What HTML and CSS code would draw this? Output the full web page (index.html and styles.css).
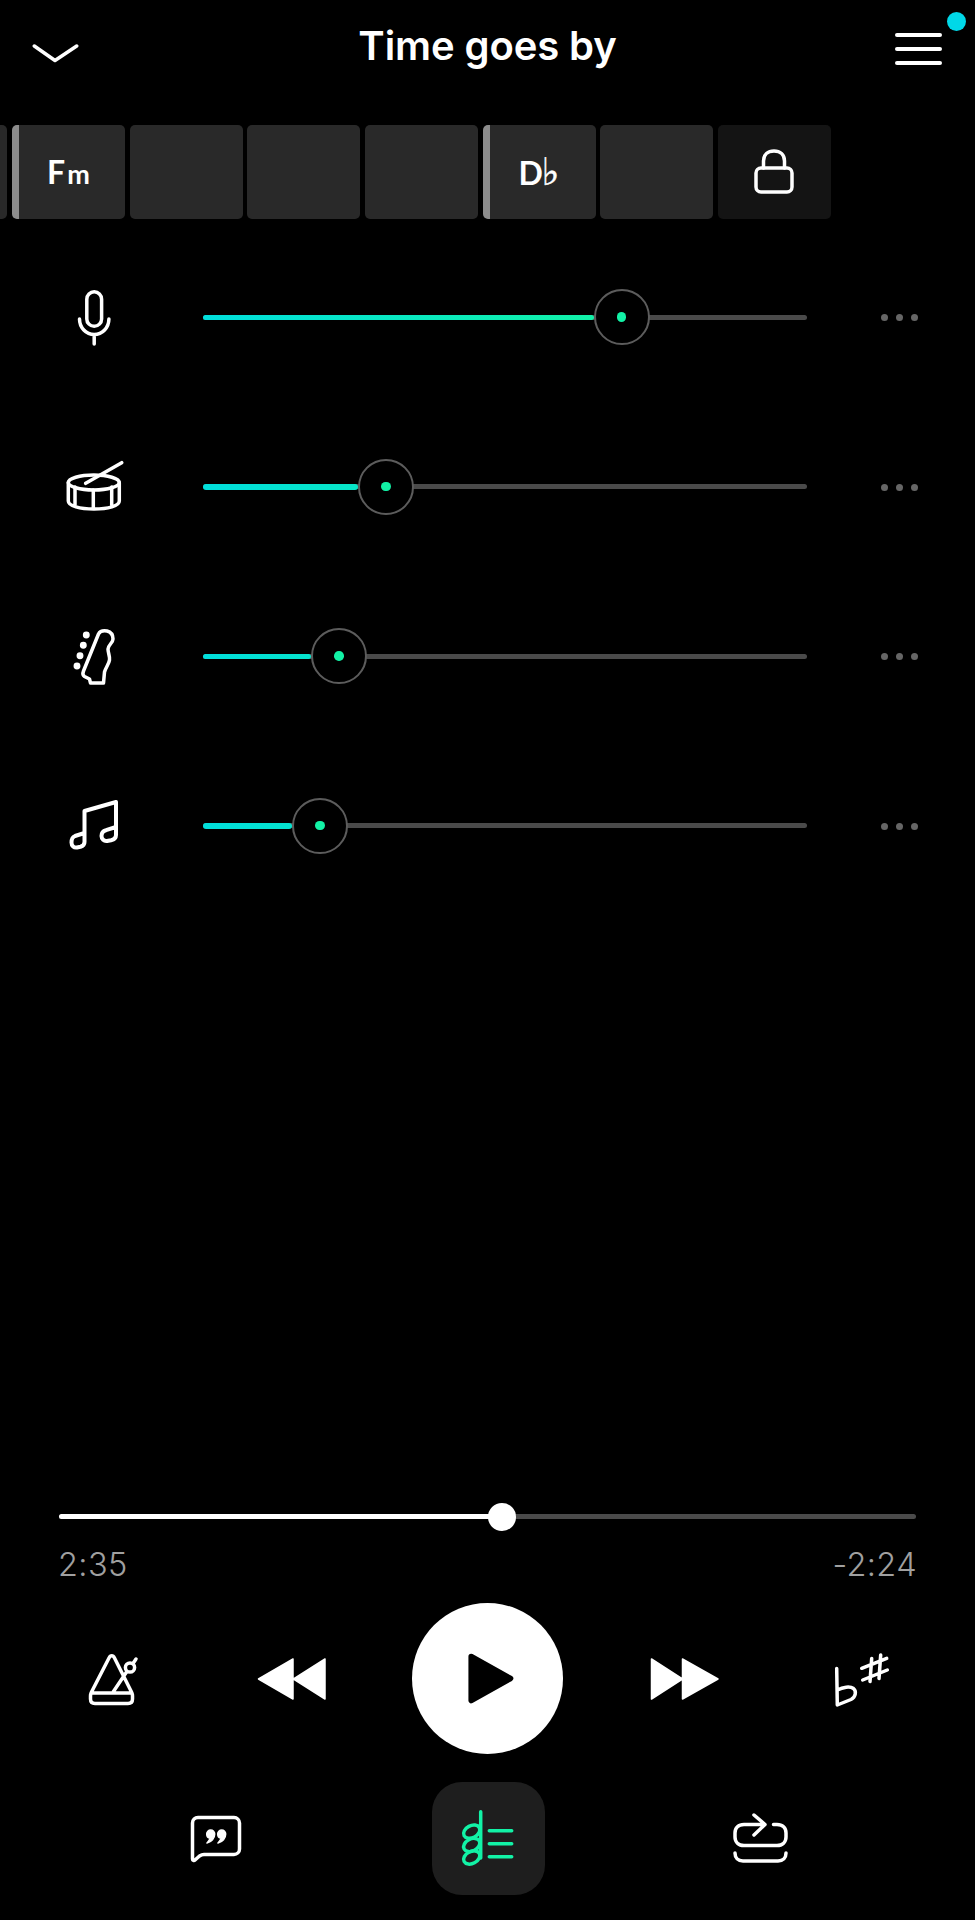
FILE: index.html
```html
<!DOCTYPE html>
<html lang="en">
<head>
<meta charset="utf-8">
<title>Time goes by</title>
<link rel="stylesheet" href="styles.css">
</head>
<body>
<main class="page">
  <header class="header">
    <svg class="chevron" viewBox="0 0 48 22"><path d="M2.3 3 L23 17.5 L44.7 3"/></svg>
    <h1 class="title">Time goes by</h1>
    <div class="menu"><span></span><span></span><span></span><i class="badge"></i></div>
  </header>

  <section class="chords">
    <div class="cell"></div>
    <div class="cell start"><span class="chord">F<small>m</small></span></div>
    <div class="cell"></div>
    <div class="cell"></div>
    <div class="cell"></div>
    <div class="cell start"><span class="chord">D<span class="flat">♭</span></span></div>
    <div class="cell"></div>
    <div class="cell locked">
      <svg class="lock" viewBox="0 0 44 48"><path d="M11.5 20 V13 C11.5 6.5 16 3 22 3 C28 3 32.5 6.5 32.5 13 V20"/><rect x="4" y="20" width="36" height="24" rx="5"/></svg>
    </div>
  </section>

  <section class="mixer">
    <div class="row">
      <svg class="icon" viewBox="0 0 64 64"><rect x="24.8" y="6.8" width="14.8" height="34.5" rx="7.4"/><path d="M17.5 34 A14.7 15.5 0 0 0 46.9 34 M32.2 50 V59"/></svg>
      <div class="track"><div class="fill" style="width:391px"></div><div class="knob" style="left:418.7px"><i></i></div></div>
      <div class="more"><i></i><i></i><i></i></div>
    </div>
    <div class="row">
      <svg class="icon" viewBox="0 0 64 64"><ellipse cx="31.8" cy="27.5" rx="25.5" ry="7.5"/><path d="M6.3 27.5 V46 C6.3 51 18 54 32 54 S57.3 51 57.3 46 V27.5 M13 32 V50 M31.3 35 V54 M49.7 32 V50 M23.7 28.3 L59.7 7.7"/></svg>
      <div class="track"><div class="fill" style="width:155px"></div><div class="knob" style="left:183px"><i></i></div></div>
      <div class="more"><i></i><i></i><i></i></div>
    </div>
    <div class="row">
      <svg class="icon" viewBox="0 0 64 64"><path d="M36.5 10 C38 7 42 6.5 45 7 C49 8 51 11 51 15 C51 19 46 21 46 25 C46 29 48 32 47.5 36 C47 40 43.5 44 42.5 48 L41.5 59 H28.5 L27.5 55 L22.5 52.5 C21 51.5 20.5 49.5 21.5 47 Z"/><circle class="solid" cx="24.3" cy="11" r="2.7"/><circle class="solid" cx="21.3" cy="21.3" r="2.7"/><circle class="solid" cx="18" cy="31.7" r="2.7"/><circle class="solid" cx="15" cy="42" r="2.7"/></svg>
      <div class="track"><div class="fill" style="width:108px"></div><div class="knob" style="left:136px"><i></i></div></div>
      <div class="more"><i></i><i></i><i></i></div>
    </div>
    <div class="row">
      <svg class="icon notes" viewBox="0 0 64 64"><path d="M22.5 39 L13 42 C10.5 43 9.5 45.5 9.5 48.5 C9.5 52 12 54 15 53.5 L18.5 52.8 C21.5 52 22.5 50 22.5 48 V17 L54 8 V41 C54 44 52 45.5 49 46.2 L45 47 C42 47.5 39.5 45 39.5 42 C39.5 39 41 37 44 36.2 L54 33"/></svg>
      <div class="track"><div class="fill" style="width:89px"></div><div class="knob" style="left:117px"><i></i></div></div>
      <div class="more"><i></i><i></i><i></i></div>
    </div>
  </section>

  <footer class="footer">
    <div class="progress">
      <div class="progress-track"><div class="progress-fill" style="width:442px"></div><div class="progress-knob" style="left:442.7px"></div></div>
    </div>
    <div class="times"><span>2:35</span><span>-2:24</span></div>

    <div class="controls">
      <svg class="icon-lg" viewBox="0 0 72 72"><path d="M33 15 L15.5 49 C15 50 14.5 51.5 14.5 53 V56 C14.5 59 16.5 60.5 19 60.5 H52 C54.5 60.5 56.5 59 56.5 56 V53 C56.5 51.5 56 50 55.5 49 L38.5 15 C37 12 34.5 12 33 15 Z M15 50 H56 M37.3 48.7 L50.7 28.7 M57 20.5 L60 16"/><circle cx="54" cy="24.5" r="4.6"/></svg>
      <svg class="icon-lg" viewBox="0 0 72 72"><path class="solid" d="M2.5 36 L37 16 V56 Z M37.5 36 L69 16 V56 Z"/></svg>
      <div class="play"><svg viewBox="0 0 60 60"><path class="solid" d="M10 6 L53 30 L10 54 Z"/></svg></div>
      <svg class="icon-lg" viewBox="0 0 72 72"><path class="solid" d="M2.5 16 L33.5 36 L2.5 56 Z M33.5 16 L69 36 L33.5 56 Z"/></svg>
      <svg class="icon-lg" viewBox="0 0 72 72"><path d="M10.7 25.5 L11.3 62 L25 56.5 C30 54 30.5 48 27.5 45.5 C24 43 17 44 11.3 47 M35.7 25.3 L60.7 15.3 M36.7 37 L61.3 27 M45.7 15.5 L44 38.5 M54.7 12 L53 35.5"/></svg>
    </div>

    <div class="tabs">
      <svg class="icon-lg" viewBox="0 0 72 72"><path d="M12.5 20 C12.5 16.5 15 14.5 18 14.5 H54 C57 14.5 59.5 17 59.5 20 V46 C59.5 49 57 51.5 54 51.5 H24 C22 51.5 21 52 19.5 53 L15 57 C14 58 12.5 57.5 12.5 56 Z"/><path class="solid" d="M26.7 31 A4 4 0 1 1 34.7 31 C34.7 35.5 31.5 39 27 40 C29 37.5 30 36 30 35 C28 35 26.7 33.3 26.7 31 Z M37.7 31 A4 4 0 1 1 45.7 31 C45.7 35.5 42.5 39 38 40 C40 37.5 41 36 41 35 C39 35 37.7 33.3 37.7 31 Z"/></svg>
      <div class="tab-active">
        <svg class="icon-lg accent" viewBox="0 0 72 72"><path d="M28.7 8.7 V55 M37.3 27.7 H59.7 M37.3 40.7 H59.7 M37.3 53.7 H59.7"/><ellipse cx="19.7" cy="28.7" rx="8.6" ry="6" transform="rotate(-28 19.7 28.7)"/><ellipse cx="19.7" cy="42" rx="8.6" ry="6" transform="rotate(-28 19.7 42)"/><ellipse cx="19.7" cy="54.5" rx="8.6" ry="6" transform="rotate(-28 19.7 54.5)"/></svg>
      </div>
      <svg class="icon-lg" viewBox="0 0 72 72"><path d="M41 21.5 H20 C14.5 21.5 11 25 11 30 V34 C11 39 14.5 42.5 20 42.5 H53 C58.5 42.5 62 39 62 34 V30 C62 25 58.5 21.5 53 21.5 H49.5 M30 12 L41 21.5 L30 32 M11 50 C11 55 14 58 19 58 H54 C59 58 62 55 62 50"/></svg>
    </div>
  </footer>
</main>
</body>
</html>
```

FILE: styles.css
```css
* { box-sizing: border-box; }
html, body { margin: 0; padding: 0; background: #000; }
.page {
  width: 975px; height: 1920px; overflow: hidden; background: #000; color: #fff;
  display: flex; flex-direction: column;
  font-family: Inter, "Liberation Sans", sans-serif;
}
svg { display: block; flex: none; }
svg path, svg rect, svg circle, svg ellipse {
  fill: none; stroke: #fff; stroke-width: 3.5; stroke-linecap: round; stroke-linejoin: round;
}
svg .solid { fill: #fff; stroke: #fff; stroke-width: 1.5; }
.notes path { stroke-width: 4; }

.header { height: 100px; position: relative; display: flex; align-items: flex-start; justify-content: center; }
.chevron { position: absolute; left: 32px; top: 42.5px; width: 48px; height: 22px; }
.title { margin: 22px 0 0; font-size: 40px; line-height: 48px; font-weight: 600; letter-spacing: -0.1px; }
.menu { position: absolute; left: 895px; top: 33px; width: 47px; height: 32px; display: flex; flex-direction: column; justify-content: space-between; }
.menu span { display: block; height: 3.6px; background: #fff; border-radius: 2px; }
.badge { position: absolute; left: 51.5px; top: -21px; width: 19px; height: 19px; border-radius: 50%; background: #00d8e8; }

.chords { margin: 25px 0 0 -105.7px; display: flex; gap: 4.67px; height: 94px; }
.cell { flex: none; width: 113px; height: 94px; background: #292929; border-radius: 5px; overflow: hidden; display: flex; align-items: center; justify-content: center; }
.cell.start { border-left: 7px solid #8c8c8c; padding-right: 7px; }
.cell.locked { background: #141414; }
.chord { font-family: Lato, "Noto Sans", sans-serif; font-weight: 700; font-size: 32px; line-height: 1; display: flex; align-items: baseline; }
.chord small { font-size: 27px; font-weight: 700; margin-left: 2px; }
.flat { font-family: "DejaVu Sans", sans-serif; font-weight: 700; font-size: 38px; line-height: 1; margin-left: -1px; -webkit-text-stroke: 0.5px #fff; }
.lock { width: 44px; height: 48px; }

.mixer { margin-top: 13.4px; display: flex; flex-direction: column; }
.row { height: 169.5px; display: flex; align-items: center; padding-left: 62px; }
.icon { width: 64px; height: 64px; }
.track { position: relative; width: 604px; height: 5px; margin-left: 77px; background: #4a4a4a; border-radius: 3px; }
.fill { height: 5.5px; border-radius: 3px; background: linear-gradient(90deg, #00dfdc, #12f2a6); background-size: 400px 5px; }
.knob { position: absolute; top: 2.5px; width: 56px; height: 56px; margin: -28px 0 0 -28px; border-radius: 50%; border: 2.5px solid #5c5c5c; background: #000; display: flex; align-items: center; justify-content: center; }
.knob i { width: 9.5px; height: 9.5px; border-radius: 50%; background: #12f2a6; }
.more { margin: 1.5px 0 0 73.5px; display: flex; gap: 8px; }
.more i { width: 7px; height: 7px; border-radius: 50%; background: #666; }

.footer { margin-top: auto; display: flex; flex-direction: column; padding-bottom: 24.7px; }
.progress { height: 29px; padding: 12.7px 59px 0; }
.progress-track { position: relative; height: 4.5px; background: #4a4a4a; border-radius: 3px; }
.progress-fill { height: 100%; background: #fff; border-radius: 3px; }
.progress-knob { position: absolute; top: 2.2px; width: 28px; height: 28px; margin: -14px 0 0 -14px; border-radius: 50%; background: #fff; }
.times { height: 40px; margin-top: 14px; padding: 0 58px; display: flex; justify-content: space-between; align-items: center; color: #a0a0a0; font-size: 32.5px; font-weight: 300; line-height: 40px; letter-spacing: 0.4px; }

.controls { margin-top: 18.5px; height: 151px; padding-left: 22px; display: grid; grid-template-columns: 180px 180px 210px 186px 168px; justify-items: center; align-items: center; }
.icon-lg { width: 72px; height: 72px; }
.play { width: 151px; height: 151px; border-radius: 50%; background: #fff; display: flex; align-items: center; justify-content: center; }
.play svg { width: 55px; height: 55px; margin-left: 4px; }
.play .solid { fill: #000; stroke: #000; stroke-width: 6; }

.tabs { margin-top: 28.2px; height: 113px; padding-left: 76px; display: grid; grid-template-columns: 280px 264px 280px; justify-items: center; align-items: center; }
.tab-active { width: 113px; height: 113px; border-radius: 30px; background: #1e1e1e; display: flex; align-items: center; justify-content: center; }
.accent path, .accent ellipse { stroke: #12f2a6; }
```
